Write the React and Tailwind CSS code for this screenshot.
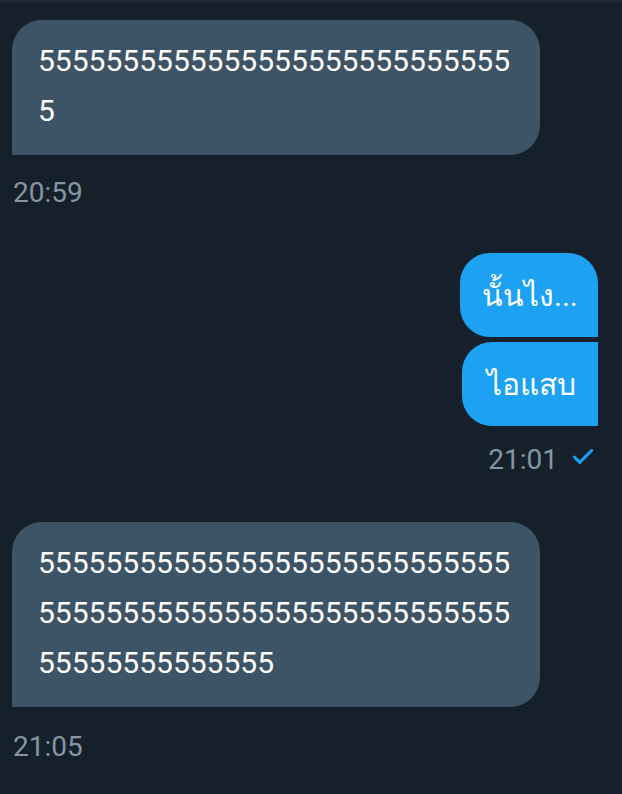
import { Check } from 'lucide-react'

const font = { fontFamily: 'Roboto, "Noto Sans", "DejaVu Sans", sans-serif' }

function GrayBubble({ text, className = '' }) {
  return (
    <div className={`w-[528px] ml-[12px] rounded-t-[30px] rounded-br-[30px] bg-[#3d5466] pl-[26px] pr-[20px] pt-[16px] pb-[19px] text-[30px] leading-[50px] text-white break-all ${className}`}>
      {text}
    </div>
  )
}

export default function App() {
  return (
    <div className="min-h-[794px] w-[622px] bg-[#16202a]" style={font}>
      <div className="h-[3px] bg-[#202b36]" />

      <GrayBubble text={'5'.repeat(29)} className="mt-[17px] pt-[15px]" />
      <div className="ml-[13px] mt-[22px] text-[28px] leading-[32px] text-[#8595a3]">20:59</div>

      <div className="mt-[44px] flex flex-col items-end gap-[5px] pr-[24px]">
        <div className="flex h-[84px] w-[138px] items-center rounded-l-[30px] rounded-tr-[30px] bg-[#1da1f2] pl-[22px] text-[30px] text-white">
          นั้นไง...
        </div>
        <div className="flex h-[84px] w-[136px] items-center rounded-l-[30px] bg-[#1da1f2] pl-[25px] text-[30px] text-white">
          ไอแสบ
        </div>
      </div>
      <div className="mt-[18px] flex items-center justify-end gap-[12px] pr-[26px]">
        <span className="text-[28px] leading-[32px] text-[#8595a3]">21:01</span>
        <Check className="h-[26px] w-[26px] -mt-[6px] text-[#1da1f2]" strokeWidth={2.8} />
      </div>

      <GrayBubble text={'5'.repeat(70)} className="mt-[46px]" />
      <div className="ml-[13px] mt-[24px] text-[28px] leading-[32px] text-[#8595a3]">21:05</div>
    </div>
  )
}
